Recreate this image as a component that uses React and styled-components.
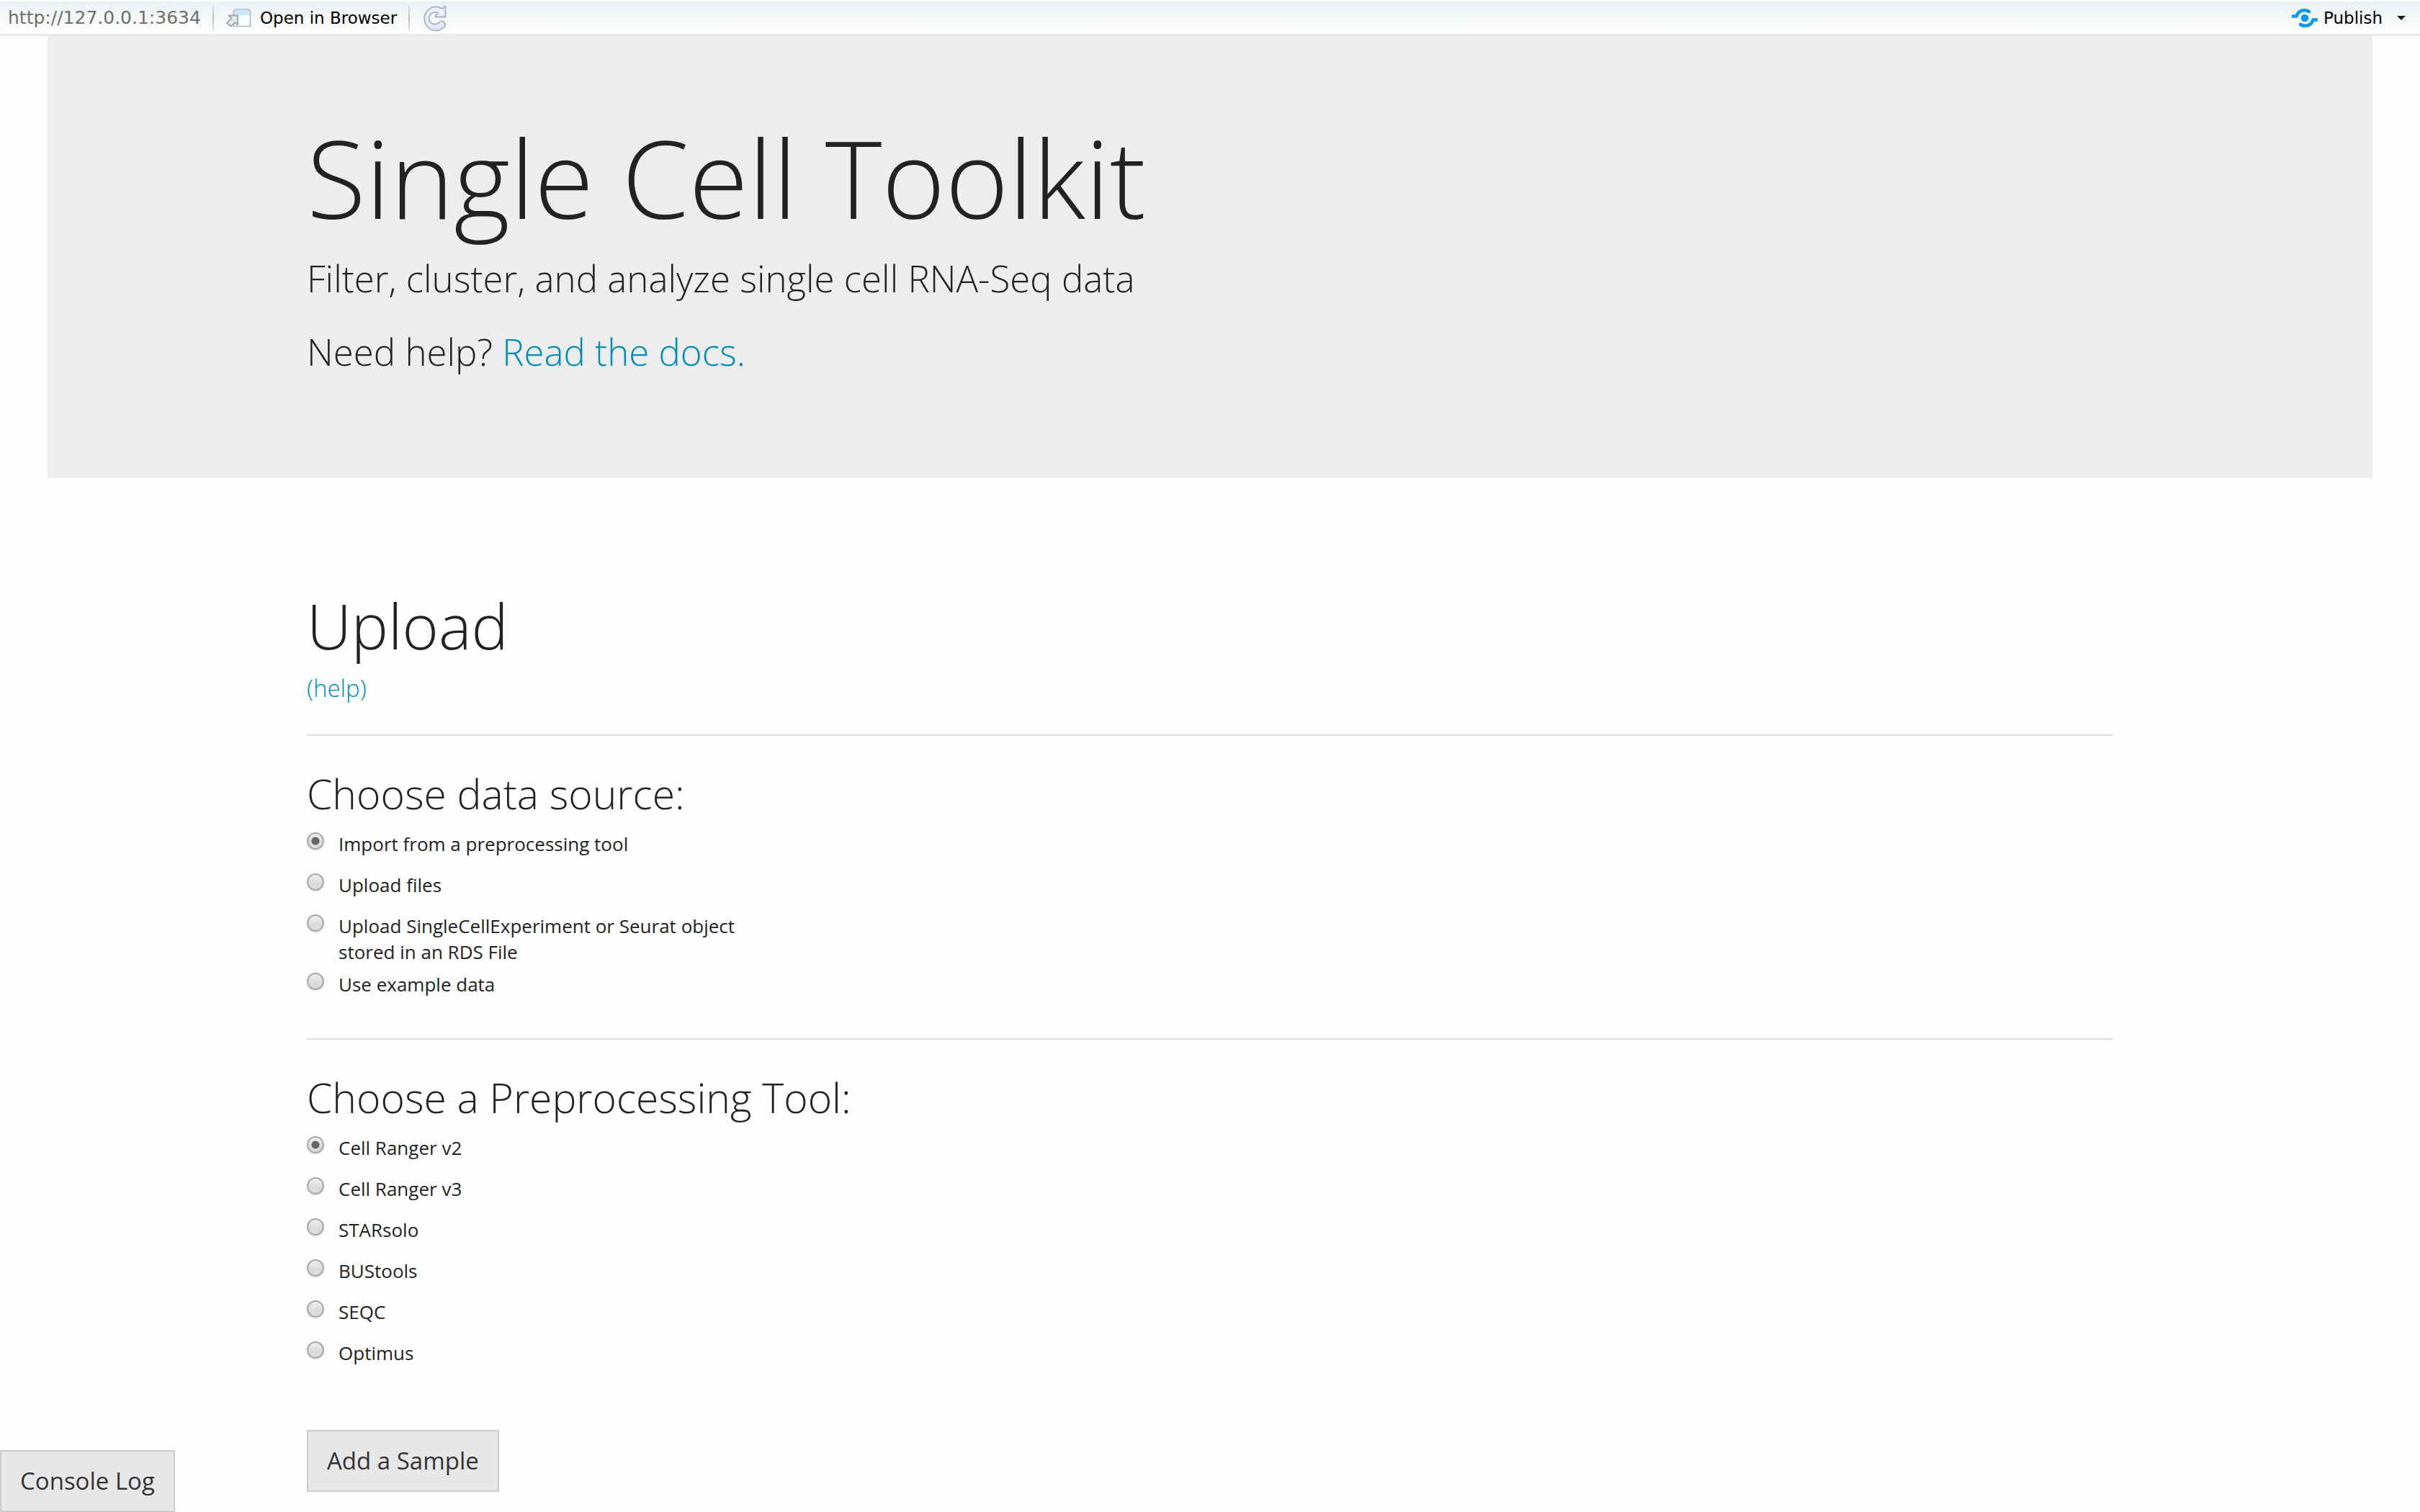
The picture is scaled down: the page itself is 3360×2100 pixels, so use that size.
import React, { useId, useState } from "react";
import styled, { createGlobalStyle, css } from "styled-components";

const color = {
  page: "#fefefe",
  text: "#222222",
  link: "#008cba",
  rule: "#dddddd",
  hero: "#ededed",
  button: "#e7e7e7",
  buttonBorder: "#cbcbcb",
  buttonText: "#333333",
};

const GlobalStyle = createGlobalStyle`
  *, *::before, *::after { box-sizing: border-box; }
  body {
    margin: 0;
    background: ${color.page};
    color: ${color.text};
    font-family: "Open Sans", "Noto Sans", sans-serif;
    font-size: 26px;
    line-height: 36px;
  }
`;

/* ---------- viewer toolbar ---------- */

const Toolbar = styled.header`
  display: flex;
  align-items: center;
  height: 50px;
  padding: 0 20px 0 11px;
  border-top: 2px solid #ffffff;
  border-bottom: 3px solid #e9e9ed;
  background: linear-gradient(#eef2f4, #fdfefe);
  font-family: "DejaVu Sans", sans-serif;
  font-size: 23px;
  line-height: 32px;
`;

const Address = styled.span`
  color: #6e6e6e;
  font-size: 25px;
`;

const Separator = styled.span`
  width: 2px;
  height: 36px;
  margin: 0 16px;
  background: linear-gradient(#e2e5e7, #b9bcbe 50%, #dfe1e2);
`;

const Spacer = styled.span`
  flex: 1;
`;

const ToolButton = styled.button`
  display: flex;
  align-items: center;
  gap: 12px;
  padding: 0;
  border: 0;
  background: none;
  color: #000000;
  font: inherit;
  cursor: pointer;
`;

const PublishButton = styled(ToolButton)`
  gap: 8px;
`;

const MenuButton = styled(ToolButton)`
  margin-left: 20px;
`;

const OpenIcon = () => (
  <svg width="36" height="28" viewBox="0 0 36 28" aria-hidden="true">
    <path d="M11.5 25.5V6q0-4 4-4h15q4 0 4 4v19.5z" fill="#fbfdff" stroke="#a9b7c0" strokeWidth="1.6" />
    <path d="M12.3 10V6q0-3.2 3.2-3.2h15q3.2 0 3.2 3.2v4z" fill="#cde4fb" />
    <path d="M4.5 10.5H17V23.5L13.5 20L7.5 25.5L2 21L8.5 14.5Z" fill="#e6ebef" stroke="#9aa7b1" strokeWidth="1.8" strokeLinejoin="round" />
  </svg>
);

const RefreshIcon = () => (
  <svg width="36" height="38" viewBox="0 0 36 38" aria-hidden="true">
    <defs>
      <linearGradient id="refresh-fill" x1="0" y1="0" x2="0" y2="1">
        <stop offset="0" stopColor="#eef1f6" />
        <stop offset="1" stopColor="#dbe8fb" />
      </linearGradient>
    </defs>
    <path
      d="M33.5 3V17.5H19.5V16L23 12.2A8.3 8.3 0 1 0 24.5 25.5C26.5 22.8 29 23 31 24.5C33.5 26.5 34 28.5 32.5 30.5A16 16.5 0 1 1 29.5 6.5L32 3Z"
      fill="url(#refresh-fill)"
      stroke="#a9b0bf"
      strokeWidth="1.8"
      strokeLinejoin="round"
    />
  </svg>
);

const PublishIcon = () => (
  <svg width="36" height="28" viewBox="0 0 36 28" aria-hidden="true">
    <g fill="none" stroke="#0a9bee" strokeWidth="4.6">
      <path d="M0 11.5H6.5C8.5 5.5 12.5 3.2 17.5 3.2c3 0 5 .6 6.5 2" />
      <path d="M36 16.5h-6.5C27.5 22.5 23.5 24.8 18.5 24.8c-3 0-5-.6-6.5-2" />
    </g>
    <circle cx="24" cy="5.2" r="2.3" fill="#0a9bee" />
    <circle cx="12" cy="22.8" r="2.3" fill="#0a9bee" />
    <circle cx="18" cy="14" r="5.3" fill="#0a9bee" />
  </svg>
);

const CaretIcon = () => (
  <svg width="12" height="6" viewBox="0 0 12 6" aria-hidden="true">
    <path d="M0 0h12L6 6z" fill="#1a1a1a" />
  </svg>
);

/* ---------- page ---------- */

const Hero = styled.section`
  margin: 0 66px;
  padding: 114px 360px 140px;
  background: ${color.hero};
`;

const Title = styled.h1`
  margin: 0 0 22px;
  font-size: 150px;
  font-weight: 300;
  line-height: 164px;
`;

const Lead = styled.p`
  margin: 0;
  font-size: 51px;
  font-weight: 300;
  line-height: 72px;

  & + & {
    margin-top: 30px;
  }
`;

const Link = styled.a`
  color: ${color.link};
  text-decoration: none;
`;

const Main = styled.main`
  margin: 0 66px;
  padding: 145px 360px 0;
`;

const PageHeading = styled.h2`
  margin: 0;
  font-size: 86px;
  font-weight: 300;
  line-height: 120px;
`;

const Help = styled.h5`
  margin: 4px 0 0;
  font-size: 33px;
  font-weight: 300;
  line-height: 46px;
`;

const Rule = styled.hr`
  margin: 41px 0 40px;
  border: 0;
  border-top: 2px solid ${color.rule};
`;

const Group = styled.fieldset`
  min-width: 0;
  margin: 0;
  padding: 0 0 4px;
  border: 0;
`;

const GroupHeading = styled.legend`
  margin-bottom: 12px;
  padding: 0;
  font-size: 57px;
  font-weight: 300;
  line-height: 80px;
`;

const Options = styled.div`
  display: flex;
  flex-direction: column;
  gap: 9px;
  max-width: 620px;
`;

const Option = styled.label`
  display: flex;
  align-items: flex-start;
  gap: 20px;
  min-height: 48px;
  cursor: pointer;
`;

const Radio = styled.input`
  flex: none;
  appearance: none;
  width: 24px;
  height: 24px;
  margin: 2px 0 0;
  border: 2px solid #a8a8a8;
  border-radius: 50%;
  background: linear-gradient(#efefef, #dadada 60%, #dedede);
  box-shadow: 0 2px 1px rgba(0, 0, 0, 0.08);

  &:checked {
    background: radial-gradient(circle, #666666 5px, transparent 6px), linear-gradient(#efefef, #dadada 60%, #dedede);
  }
`;

const buttonLook = css`
  padding: 18px 26px;
  border: 2px solid ${color.buttonBorder};
  background: ${color.button};
  color: ${color.buttonText};
  font-family: inherit;
  font-size: 33px;
  line-height: 46px;
  cursor: pointer;
`;

const ActionButton = styled.button`
  ${buttonLook}
  display: block;
  margin-top: 73px;
`;

const ConsoleButton = styled.button`
  ${buttonLook}
  position: fixed;
  left: 0;
  bottom: 0;
`;

const sources = [
  "Import from a preprocessing tool",
  "Upload files",
  "Upload SingleCellExperiment or Seurat object stored in an RDS File",
  "Use example data",
];

const tools = ["Cell Ranger v2", "Cell Ranger v3", "STARsolo", "BUStools", "SEQC", "Optimus"];

function RadioGroup({ title, options }) {
  const name = useId();
  const [selected, setSelected] = useState(options[0]);
  return (
    <Group>
      <GroupHeading>{title}</GroupHeading>
      <Options>
        {options.map((option, index) => (
          <Option key={option} htmlFor={`${name}-${index}`}>
            <Radio
              type="radio"
              id={`${name}-${index}`}
              name={name}
              value={option}
              checked={selected === option}
              onChange={() => setSelected(option)}
            />
            <span>{option}</span>
          </Option>
        ))}
      </Options>
    </Group>
  );
}

export default function App() {
  return (
    <>
      <GlobalStyle />
      <Toolbar>
        <Address>http://127.0.0.1:3634</Address>
        <Separator />
        <ToolButton type="button">
          <OpenIcon />
          Open in Browser
        </ToolButton>
        <Separator />
        <ToolButton type="button" aria-label="Refresh">
          <RefreshIcon />
        </ToolButton>
        <Spacer />
        <PublishButton type="button">
          <PublishIcon />
          Publish
        </PublishButton>
        <MenuButton type="button" aria-label="Publish options">
          <CaretIcon />
        </MenuButton>
      </Toolbar>
      <Hero>
        <Title>Single Cell Toolkit</Title>
        <Lead>Filter, cluster, and analyze single cell RNA-Seq data</Lead>
        <Lead>
          Need help? <Link href="#docs">Read the docs.</Link>
        </Lead>
      </Hero>
      <Main>
        <PageHeading>Upload</PageHeading>
        <Help>
          <Link href="#help">(help)</Link>
        </Help>
        <Rule />
        <RadioGroup title="Choose data source:" options={sources} />
        <Rule />
        <RadioGroup title="Choose a Preprocessing Tool:" options={tools} />
        <ActionButton type="button">Add a Sample</ActionButton>
      </Main>
      <ConsoleButton type="button">Console Log</ConsoleButton>
    </>
  );
}
